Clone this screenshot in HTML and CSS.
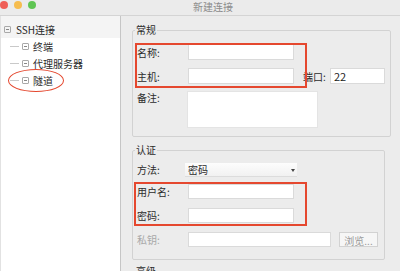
FILE: index.html
```html
<!DOCTYPE html>
<html lang="zh-CN">
<head>
    <meta charset="UTF-8">
    <meta name="viewport" content="width=device-width, initial-scale=1.0">
    <title>新建连接</title>
    <link rel="stylesheet" href="styles.css">
</head>
<body>
    <div class="titlebar">
        <div class="lights">
            <span class="light red"></span>
            <span class="light yellow"></span>
            <span class="light green"></span>
        </div>
        <div class="title">新建连接</div>
    </div>

    <div class="main">
        <div class="sidebar">
            <ul class="tree">
                <li class="node root"><span class="toggle"></span>SSH连接</li>
                <li class="node child"><span class="toggle"></span>终端</li>
                <li class="node child"><span class="toggle"></span>代理服务器</li>
                <li class="node child tunnel"><span class="toggle"></span>隧道<span class="circle"></span></li>
            </ul>
        </div>

        <div class="content">
            <fieldset class="group general">
                <legend>常规</legend>
                <div class="marked first">
                    <div class="row">
                        <label for="name">名称:</label>
                        <input type="text" id="name" class="field">
                    </div>
                    <div class="row last">
                        <label for="host">主机:</label>
                        <input type="text" id="host" class="field">
                        <label for="port" class="port-label">端口:</label>
                        <input type="text" id="port" class="field port" value="22">
                    </div>
                </div>
                <div class="row note">
                    <label for="note">备注:</label>
                    <textarea id="note" class="memo"></textarea>
                </div>
            </fieldset>

            <fieldset class="group auth">
                <legend>认证</legend>
                <div class="row method">
                    <label>方法:</label>
                    <div class="select">密码</div>
                </div>
                <div class="marked second">
                    <div class="row">
                        <label for="user">用户名:</label>
                        <input type="text" id="user" class="field">
                    </div>
                    <div class="row last">
                        <label for="pass">密码:</label>
                        <input type="password" id="pass" class="field">
                    </div>
                </div>
                <div class="row last disabled">
                    <label for="key">私钥:</label>
                    <input type="text" id="key" class="field key">
                    <button type="button" class="browse">浏览...</button>
                </div>
            </fieldset>

            <fieldset class="group advanced">
                <legend>高级</legend>
            </fieldset>
        </div>
    </div>
</body>
</html>
```

FILE: styles.css
```css
* {
    box-sizing: border-box;
}
body {
    margin: 0;
    width: 400px;
    height: 271px;
    overflow: hidden;
    background-color: #ececec;
    font-family: "Noto Sans CJK SC", "Noto Sans", sans-serif;
    font-size: 10px;
    color: #2b2b2b;
}
.titlebar {
    display: flex;
    align-items: flex-start;
    height: 16px;
    border-bottom: 1px solid #d4d4d4;
    background-color: #ebebeb;
}
.lights {
    display: flex;
    gap: 6px;
    padding-top: 1px;
}
.light {
    width: 8px;
    height: 8px;
    border-radius: 50%;
}
.red { background-color: #ef5f57; }
.yellow { background-color: #f6bd4f; }
.green { background-color: #5fc553; }
.title {
    margin-left: 157px;
    line-height: 13px;
    color: #8c8c8c;
}
.main {
    display: flex;
    height: 255px;
    overflow: hidden;
}
.sidebar {
    width: 121px;
    background: white;
    border-left: 1px solid #e2e2e2;
    border-right: 1px solid #c6c6c6;
}
.tree {
    list-style: none;
    margin: 0;
    padding: 0;
}
.node {
    display: flex;
    align-items: center;
    height: 17px;
    line-height: 17px;
    white-space: nowrap;
}
.root {
    height: 22px;
    padding: 5px 0 0 3px;
    background-color: #f4f4f4;
}
.child {
    padding-left: 9px;
}
.child::before {
    content: '';
    width: 9px;
    height: 1px;
    margin-right: 3px;
    background-color: #c9c9c9;
}
.toggle {
    position: relative;
    width: 7px;
    height: 7px;
    margin-right: 5px;
    border: 1px solid #a9a9a9;
    border-radius: 1px;
}
.child .toggle {
    margin-right: 4px;
}
.toggle::after {
    content: '';
    position: absolute;
    left: 1px;
    top: 2px;
    width: 3px;
    height: 1px;
    background-color: #888;
}
.tunnel {
    position: relative;
}
.circle {
    position: absolute;
    left: 7px;
    top: -3px;
    width: 56px;
    height: 23px;
    border: 1.5px solid #e4472e;
    border-radius: 50%;
}
.content {
    flex: 1;
    padding: 8px 9px 0 11px;
    overflow: hidden;
}
.group {
    margin: 0;
    padding: 8px 4px 8px 4px;
    border: 1px solid #d2d2d2;
    border-radius: 2px;
}
.group legend {
    padding: 0 1px;
    margin-left: -2px;
    line-height: 12px;
    color: #2b2b2b;
}
.auth {
    margin: 7px 6px 0 0;
    padding: 7px 4px 12px 4px;
}
.advanced {
    margin-top: 5px;
    height: 20px;
}
.row {
    display: flex;
    align-items: center;
    height: 16px;
    margin-bottom: 8px;
}
.row label {
    width: 51px;
    flex-shrink: 0;
}
.row.last {
    margin-bottom: 0;
}
.field {
    width: 106px;
    height: 16px;
    padding: 0 3px;
    border: 1px solid #dadada;
    background: white;
    font: inherit;
    color: #222;
    outline: none;
}
.port-label {
    margin-left: 9px;
    width: 27px !important;
}
.port {
    width: 55px;
    font-size: 11px;
}
.note {
    align-items: flex-start;
    height: 37px;
    margin-top: 7px;
    margin-bottom: 0;
}
.note label {
    line-height: 14px;
}
.memo {
    width: 131px;
    height: 37px;
    margin-left: -1px;
    border: 1px solid #e4e4e4;
    background: white;
    resize: none;
}
.marked {
    position: relative;
}
.marked::after {
    content: '';
    position: absolute;
    border: 2px solid #e5482f;
    pointer-events: none;
}
.first::after {
    left: -2px;
    top: -1px;
    width: 168px;
    bottom: -4px;
}
.auth .row {
    height: 15px;
    margin-bottom: 9px;
}
.auth .row.last {
    margin-bottom: 0;
}
.auth .field {
    height: 15px;
}
.auth .method {
    height: 13px;
    margin-bottom: 8px;
}
.second {
    margin-bottom: 9px;
}
.second::after {
    left: -3px;
    top: -2px;
    width: 169px;
    bottom: -3px;
}
.select {
    position: relative;
    width: 112px;
    height: 13px;
    margin-left: -3px;
    padding-left: 3px;
    line-height: 13px;
    background: linear-gradient(#fdfdfd, #f1f1f1);
    box-shadow: 0 1px 0 #dcdcdc;
}
.select::after {
    content: '';
    position: absolute;
    right: 2px;
    top: 6px;
    border-left: 2px solid transparent;
    border-right: 2px solid transparent;
    border-top: 3px solid #444;
}
.disabled label {
    color: #a8a8a8;
}
.key {
    width: 143px;
}
.browse {
    width: 39px;
    height: 15px;
    margin-left: 8px;
    padding: 0;
    border: 1px solid #d2d2d2;
    background-color: #f6f6f6;
    font: inherit;
    color: #9a9a9a;
}
```
